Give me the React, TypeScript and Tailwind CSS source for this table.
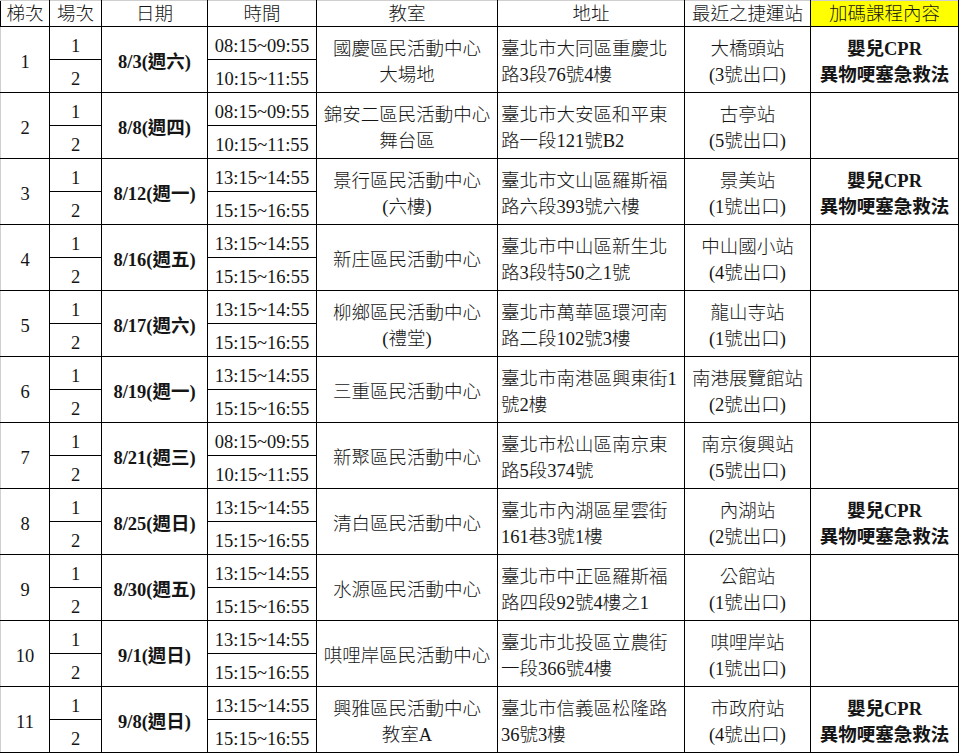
import React from "react";

type Row = {
  no: number;
  date: string;
  morning: boolean;
  room: string[];
  addr: string[];
  mrt: string[];
  extra: boolean;
};

const ROWS: Row[] = [
  { no: 1, date: "8/3(週六)", morning: true, room: ["國慶區民活動中心", "大場地"], addr: ["臺北市大同區重慶北", "路3段76號4樓"], mrt: ["大橋頭站", "(3號出口)"], extra: true },
  { no: 2, date: "8/8(週四)", morning: true, room: ["錦安二區民活動中心", "舞台區"], addr: ["臺北市大安區和平東", "路一段121號B2"], mrt: ["古亭站", "(5號出口)"], extra: false },
  { no: 3, date: "8/12(週一)", morning: false, room: ["景行區民活動中心", "(六樓)"], addr: ["臺北市文山區羅斯福", "路六段393號六樓"], mrt: ["景美站", "(1號出口)"], extra: true },
  { no: 4, date: "8/16(週五)", morning: false, room: ["新庄區民活動中心"], addr: ["臺北市中山區新生北", "路3段特50之1號"], mrt: ["中山國小站", "(4號出口)"], extra: false },
  { no: 5, date: "8/17(週六)", morning: false, room: ["柳鄉區民活動中心", "(禮堂)"], addr: ["臺北市萬華區環河南", "路二段102號3樓"], mrt: ["龍山寺站", "(1號出口)"], extra: false },
  { no: 6, date: "8/19(週一)", morning: false, room: ["三重區民活動中心"], addr: ["臺北市南港區興東街1", "號2樓"], mrt: ["南港展覽館站", "(2號出口)"], extra: false },
  { no: 7, date: "8/21(週三)", morning: true, room: ["新聚區民活動中心"], addr: ["臺北市松山區南京東", "路5段374號"], mrt: ["南京復興站", "(5號出口)"], extra: false },
  { no: 8, date: "8/25(週日)", morning: false, room: ["清白區民活動中心"], addr: ["臺北市內湖區星雲街", "161巷3號1樓"], mrt: ["內湖站", "(2號出口)"], extra: true },
  { no: 9, date: "8/30(週五)", morning: false, room: ["水源區民活動中心"], addr: ["臺北市中正區羅斯福", "路四段92號4樓之1"], mrt: ["公館站", "(1號出口)"], extra: false },
  { no: 10, date: "9/1(週日)", morning: false, room: ["唭哩岸區民活動中心"], addr: ["臺北市北投區立農街", "一段366號4樓"], mrt: ["唭哩岸站", "(1號出口)"], extra: false },
  { no: 11, date: "9/8(週日)", morning: false, room: ["興雅區民活動中心", "教室A"], addr: ["臺北市信義區松隆路", "36號3樓"], mrt: ["市政府站", "(4號出口)"], extra: true },
];

const HEAD = ["梯次", "場次", "日期", "時間", "教室", "地址", "最近之捷運站"];

function Lines({ items }: { items: string[] }) {
  return (
    <>
      {items.map((t) => (
        <div key={t}>{t}</div>
      ))}
    </>
  );
}

export default function App() {
  // Excel 匯出的表格：格線 1px 黑，上/左邊緣是淡灰
  const cell = "border border-black p-0 text-center align-middle";
  const body = `${cell} pt-[5px]`;
  return (
    <div className="h-[753px] w-[960px] overflow-hidden bg-white font-['Liberation_Serif','Noto_Sans_CJK_TC',serif] text-[18.5px] leading-[26px] font-light text-[#151515]">
      <table className="table-fixed border-collapse border-t border-l border-t-[#cfcfcf] border-l-[#cfcfcf]">
        <colgroup>
          <col className="w-[49px]" />
          <col className="w-[52px]" />
          <col className="w-[106px]" />
          <col className="w-[109px]" />
          <col className="w-[181px]" />
          <col className="w-[187px]" />
          <col className="w-[126px]" />
          <col className="w-[148px]" />
        </colgroup>
        <thead>
          <tr className="h-[26px]">
            {HEAD.map((h) => (
              <th key={h} className={`${cell} border-t-[#cfcfcf] pt-px font-light leading-[24px]`}>
                {h}
              </th>
            ))}
            <th className={`${cell} border-t-[#cfcfcf] bg-[#ffff00] pt-px font-light leading-[24px]`}>
              加碼課程內容
            </th>
          </tr>
        </thead>
        <tbody>
          {ROWS.map((r) => (
            <React.Fragment key={r.no}>
              <tr className="h-[33px]">
                <td rowSpan={2} className={`${body} border-l-[#cfcfcf]`}>
                  {r.no}
                </td>
                <td className={body}>1</td>
                <td rowSpan={2} className={`${body} font-bold`}>
                  {r.date}
                </td>
                <td className={body}>{r.morning ? "08:15~09:55" : "13:15~14:55"}</td>
                <td rowSpan={2} className={body}>
                  <Lines items={r.room} />
                </td>
                <td rowSpan={2} className={`${body} pl-[3px] text-left`}>
                  <Lines items={r.addr} />
                </td>
                <td rowSpan={2} className={body}>
                  <Lines items={r.mrt} />
                </td>
                <td rowSpan={2} className={`${body} font-bold`}>
                  {r.extra && <Lines items={["嬰兒CPR", "異物哽塞急救法"]} />}
                </td>
              </tr>
              <tr className="h-[33px]">
                <td className={body}>2</td>
                <td className={body}>{r.morning ? "10:15~11:55" : "15:15~16:55"}</td>
              </tr>
            </React.Fragment>
          ))}
        </tbody>
      </table>
    </div>
  );
}
